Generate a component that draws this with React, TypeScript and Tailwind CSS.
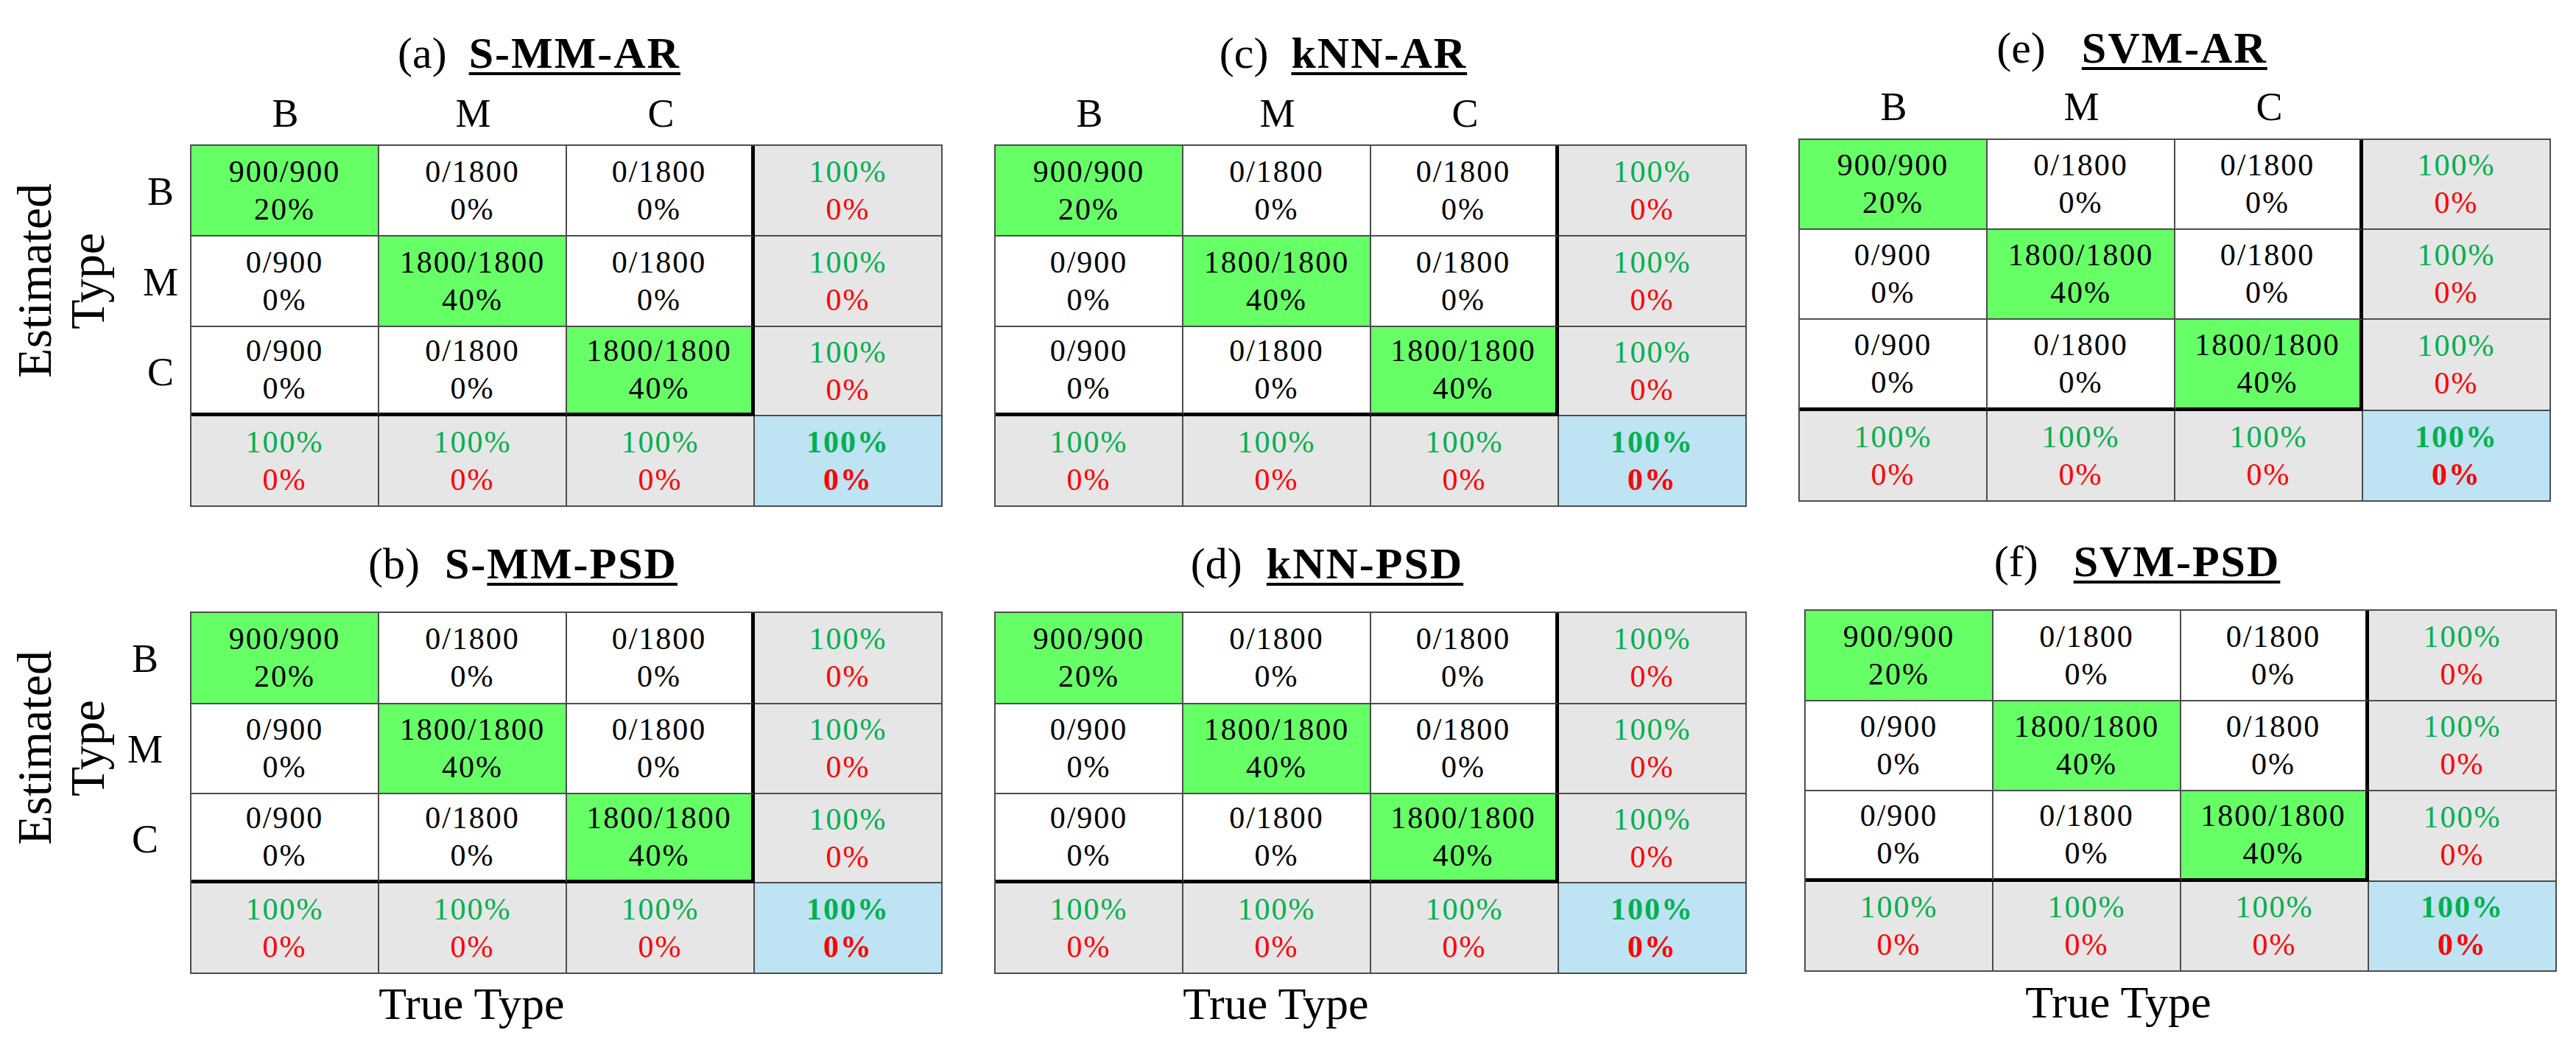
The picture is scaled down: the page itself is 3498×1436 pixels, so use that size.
type Kind = "hit" | "miss" | "sum" | "total";

type CellData = { top: string; bottom: string; kind: Kind };

const hit = (top: string, bottom: string): CellData => ({ top, bottom, kind: "hit" });
const miss = (top: string): CellData => ({ top, bottom: "0%", kind: "miss" });
const sum: CellData = { top: "100%", bottom: "0%", kind: "sum" };
const total: CellData = { top: "100%", bottom: "0%", kind: "total" };

const matrix: CellData[][] = [
  [hit("900/900", "20%"), miss("0/1800"), miss("0/1800"), sum],
  [miss("0/900"), hit("1800/1800", "40%"), miss("0/1800"), sum],
  [miss("0/900"), miss("0/1800"), hit("1800/1800", "40%"), sum],
  [sum, sum, sum, total],
];

function Cell({ cell, r, c }: { cell: CellData; r: number; c: number }) {
  const bg =
    cell.kind === "hit"
      ? "bg-[#66ff66]"
      : cell.kind === "miss"
        ? "bg-white"
        : cell.kind === "sum"
          ? "bg-[#e7e6e6]"
          : "bg-[#bee3f3]";
  const right = c === 2 && r < 3 ? "border-r-[5px] border-r-black" : "border-r-2 border-r-[#4d4d4d]";
  const bottom = r === 2 && c < 3 ? "border-b-[5px] border-b-black" : "border-b-2 border-b-[#4d4d4d]";
  const colored = cell.kind === "sum" || cell.kind === "total";
  const weight = cell.kind === "total" ? "font-bold" : "";

  return (
    <div className={`flex flex-col items-center justify-center ${bg} ${right} ${bottom}`}>
      <span className={`text-[42px] leading-[51px] tracking-[2px] ${weight} ${colored ? "text-[#00b050]" : "text-black"}`}>
        {cell.top}
      </span>
      <span className={`text-[42px] leading-[51px] tracking-[2px] ${weight} ${colored ? "text-[#ff0000]" : "text-black"}`}>
        {cell.bottom}
      </span>
    </div>
  );
}

function Matrix({ rowsClass }: { rowsClass: string }) {
  return (
    <div className={`grid w-fit grid-cols-[255px_255px_255px_255px] border-t-2 border-l-2 border-[#4d4d4d] ${rowsClass}`}>
      {matrix.map((row, r) => row.map((cell, c) => <Cell key={`${r}-${c}`} cell={cell} r={r} c={c} />))}
    </div>
  );
}

function Title({
  label,
  plain,
  under,
  gapClass,
  padClass,
}: {
  label: string;
  plain?: string;
  under: string;
  gapClass: string;
  padClass: string;
}) {
  return (
    <div className={`flex h-[70px] w-[1020px] items-baseline justify-center text-[60px] leading-[70px] ${padClass}`}>
      <span>{label}</span>
      <span className={`font-bold tracking-[2px] ${gapClass}`}>
        {plain}
        <span className="underline decoration-[4px] underline-offset-[6px]">{under}</span>
      </span>
    </div>
  );
}

function Headers() {
  return (
    <div className="grid h-[64px] grid-cols-[255px_255px_255px_255px] pl-[2px] text-[54px] leading-[64px]">
      <div className="text-center">B</div>
      <div className="text-center">M</div>
      <div className="text-center">C</div>
      <div />
    </div>
  );
}

function EstimatedType() {
  return (
    <div className="flex h-[369px] w-[155px] items-center pl-[11px]">
      <div className="rotate-180 text-center text-[66px] leading-[72px] [writing-mode:vertical-rl]">
        Estimated
        <br />
        Type
      </div>
    </div>
  );
}

function RowLabels({ padClass, heights }: { padClass: string; heights: string[] }) {
  return (
    <div className={`flex w-[103px] flex-col pt-[2px] text-[54px] leading-[64px] ${padClass}`}>
      {["B", "M", "C"].map((l, i) => (
        <div key={l} className={`flex items-center justify-center ${heights[i]}`}>
          {l}
        </div>
      ))}
    </div>
  );
}

function TrueType({ className }: { className: string }) {
  return <div className={`w-[765px] text-center text-[62px] leading-[70px] ${className}`}>True Type</div>;
}

export default function App() {
  return (
    <div className="flex h-[1436px] w-[3498px] overflow-hidden bg-white font-['Liberation_Serif',serif] text-black">
      {/* left column: (a) and (b) with the axis labels */}
      <div className="flex w-[1350px] shrink-0 flex-col">
        <div className="ml-[258px] mt-[37px]">
          <Title label="(a)" under="S-MM-AR" gapClass="ml-[30px]" padClass="pr-[72px]" />
        </div>
        <div className="ml-[258px] mt-[15px]">
          <Headers />
        </div>
        <div className="mt-[10px] flex">
          <EstimatedType />
          <RowLabels padClass="pl-[23px]" heights={["h-[123px]", "h-[123px]", "h-[121px]"]} />
          <Matrix rowsClass="grid-rows-[123px_123px_121px_123px]" />
        </div>

        <div className="ml-[258px] mt-[42px]">
          <Title label="(b)" plain="S-" under="MM-PSD" gapClass="ml-[34px]" padClass="pr-[116px]" />
        </div>
        <div className="mt-[30px] flex">
          <EstimatedType />
          <RowLabels padClass="pr-[19px]" heights={["h-[124px]", "h-[122px]", "h-[121px]"]} />
          <Matrix rowsClass="grid-rows-[124px_122px_121px_123px]" />
        </div>
        <TrueType className="ml-[258px] mt-[5px]" />
      </div>

      {/* middle column: (c) and (d) */}
      <div className="flex w-[1092px] shrink-0 flex-col">
        <div className="mt-[37px]">
          <Title label="(c)" under="kNN-AR" gapClass="ml-[31px]" padClass="pr-[72px]" />
        </div>
        <div className="mt-[15px]">
          <Headers />
        </div>
        <div className="mt-[10px]">
          <Matrix rowsClass="grid-rows-[123px_123px_121px_123px]" />
        </div>

        <div className="mt-[42px]">
          <Title label="(d)" under="kNN-PSD" gapClass="ml-[33px]" padClass="pr-[116px]" />
        </div>
        <div className="mt-[30px]">
          <Matrix rowsClass="grid-rows-[124px_122px_121px_123px]" />
        </div>
        <TrueType className="mt-[5px]" />
      </div>

      {/* right column: (e) and (f) */}
      <div className="flex flex-col">
        <div className="mt-[30px]">
          <Title label="(e)" under="SVM-AR" gapClass="ml-[49px]" padClass="pr-[114px]" />
        </div>
        <div className="mt-[13px]">
          <Headers />
        </div>
        <div className="mt-[11px]">
          <Matrix rowsClass="grid-rows-[122px_122px_124px_123px]" />
        </div>

        <div className="ml-[8px] mt-[46px]">
          <Title label="(f)" under="SVM-PSD" gapClass="ml-[48px]" padClass="pr-[116px]" />
        </div>
        <div className="ml-[8px] mt-[30px]">
          <Matrix rowsClass="grid-rows-[123px_122px_123px_122px]" />
        </div>
        <TrueType className="ml-[52px] mt-[6px]" />
      </div>
    </div>
  );
}
